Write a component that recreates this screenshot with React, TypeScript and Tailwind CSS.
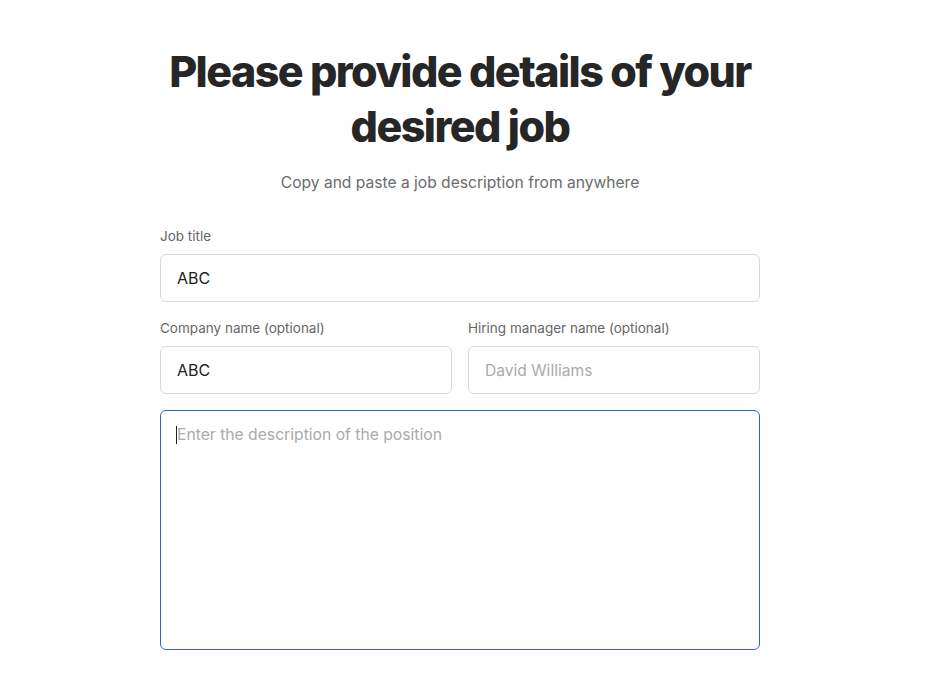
export default function App() {
  return (
    <div className="min-h-screen bg-white font-['Inter',sans-serif]">
      <div className="ml-[160px] w-[600px] pt-[44px]">
        <h1 className="text-center text-[43px] font-extrabold leading-[55px] tracking-[-0.036em] text-[#262626]">
          Please provide details of your desired job
        </h1>
        <p className="mt-[17px] text-center text-[15.6px] leading-6 text-[#6b6b6b]">
          Copy and paste a job description from anywhere
        </p>

        <div className="mt-[31px] flex flex-col gap-4">
          <div className="flex flex-col gap-2">
            <label className="text-[13.5px] leading-5 text-[#666]">Job title</label>
            <input
              defaultValue="ABC"
              className="h-12 w-full rounded-md border border-[#d9d9d9] px-4 text-base text-[#222] outline-none"
            />
          </div>

          <div className="grid grid-cols-2 gap-4">
            <div className="flex flex-col gap-2">
              <label className="text-[13.5px] leading-5 text-[#666]">Company name (optional)</label>
              <input
                defaultValue="ABC"
                className="h-12 w-full rounded-md border border-[#d9d9d9] px-4 text-base text-[#222] outline-none"
              />
            </div>
            <div className="flex flex-col gap-2">
              <label className="text-[13.5px] leading-5 text-[#666]">Hiring manager name (optional)</label>
              <input
                placeholder="David Williams"
                className="h-12 w-full rounded-md border border-[#d9d9d9] px-4 text-[15.6px] text-[#222] outline-none placeholder:text-[#aaa]"
              />
            </div>
          </div>

          <div className="relative">
            <textarea
              placeholder="Enter the description of the position"
              className="block h-[240px] w-full resize-none rounded-md border border-[#2f64b8] px-4 pt-[12px] text-[15.7px] leading-6 text-[#222] outline-none placeholder:text-[#aaa]"
            />
            {/* text caret shown in the focused field */}
            <span className="pointer-events-none absolute left-[16px] top-[16px] h-[18px] w-px bg-[#222]" />
          </div>
        </div>
      </div>
    </div>
  );
}
